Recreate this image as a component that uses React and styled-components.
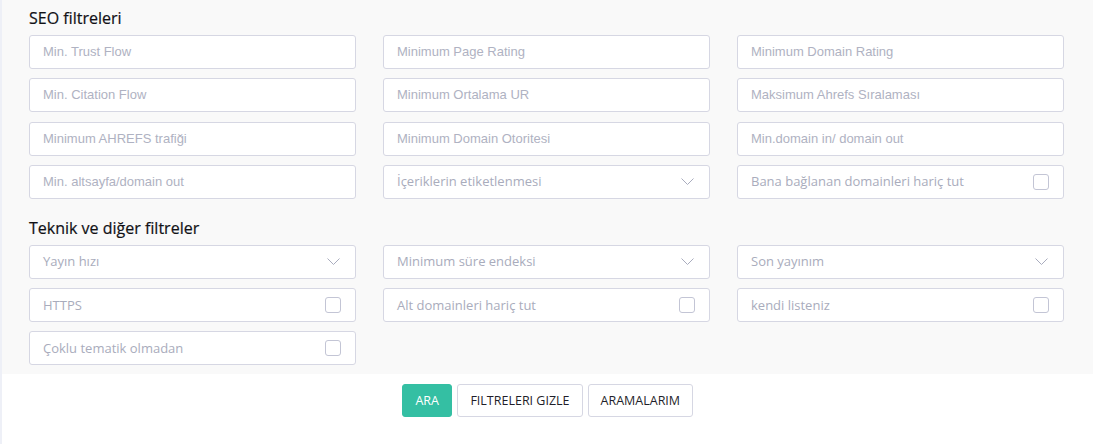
import styled, { createGlobalStyle } from 'styled-components';

const GlobalStyle = createGlobalStyle`
  html, body {
    margin: 0;
    padding: 0;
    background: #ffffff;
  }
  * { box-sizing: border-box; }
`

const Page = styled.div`
  min-height: 444px;
  border-left: 2px solid #eef0f7;
  background: #ffffff;
`
const Panel = styled.div`
  background: #f9f9f9;
  padding: 9px 28px 9px 27px;
`
const Heading = styled.h3`
  margin: ${p => (p.$first ? '0' : '20px')} 0 7px;
  font-family: "Open Sans", sans-serif;
  font-size: 16px;
  font-weight: 400;
  line-height: 19px;
  color: #111116;
  -webkit-text-stroke: 0.2px #111116;
`
const Grid = styled.div`
  display: grid;
  grid-template-columns: repeat(3, 327px);
  column-gap: 27px;
  row-gap: 9.3px;
`
const Field = styled.div`
  height: 34px;
  display: flex;
  align-items: center;
  justify-content: space-between;
  padding: 0 14px 0 13px;
  background: #ffffff;
  border: 1px solid #d6d7e3;
  border-radius: 3px;
`
const Placeholder = styled.span`
  font-family: ${p => (p.$plain ? '"Liberation Sans", Arial, sans-serif' : '"Open Sans", sans-serif')};
  font-size: 13px;
  color: ${p => (p.$plain ? '#afb2c2' : '#a9acbc')};
  white-space: nowrap;
  margin-top: -1px;
`
const Check = styled.span`
  width: 16px;
  height: 16px;
  border: 1px solid #c3c5d5;
  border-radius: 3px;
  background: #fff;
  flex: none;
`
const Actions = styled.div`
  display: flex;
  justify-content: center;
  gap: 5px;
  padding-top: 10px;
`
const Button = styled.button`
  height: 33px;
  padding: 0 ${p => p.$pad || 12}px;
  font-family: "Open Sans", sans-serif;
  font-size: 12.5px;
  text-transform: uppercase;
  border-radius: 3px;
  border: 1px solid ${p => (p.$primary ? '#34bfa3' : '#d6d7e3')};
  background: ${p => (p.$primary ? '#34bfa3' : '#ffffff')};
  color: ${p => (p.$primary ? '#ffffff' : '#1f1f2a')};
  cursor: pointer;
`

const Chevron = () => (
  <svg width="13" height="7" viewBox="0 0 13 7" fill="none" style={{ marginRight: 1 }}>
    <path d="M0.5 0.5l6 6 6-6" stroke="#a9acbe" strokeWidth="1" />
  </svg>
)

const seo = [
  { t: 'Min. Trust Flow' },
  { t: 'Minimum Page Rating' },
  { t: 'Minimum Domain Rating' },
  { t: 'Min. Citation Flow' },
  { t: 'Minimum Ortalama UR' },
  { t: 'Maksimum Ahrefs Sıralaması' },
  { t: 'Minimum AHREFS trafiği' },
  { t: 'Minimum Domain Otoritesi' },
  { t: 'Min.domain in/ domain out' },
  { t: 'Min. altsayfa/domain out' },
  { t: 'İçeriklerin etiketlenmesi', kind: 'select' },
  { t: 'Bana bağlanan domainleri hariç tut', kind: 'check' },
]

const tech = [
  { t: 'Yayın hızı', kind: 'select' },
  { t: 'Minimum süre endeksi', kind: 'select' },
  { t: 'Son yayınım', kind: 'select' },
  { t: 'HTTPS', kind: 'check' },
  { t: 'Alt domainleri hariç tut', kind: 'check' },
  { t: 'kendi listeniz', kind: 'check' },
  { t: 'Çoklu tematik olmadan', kind: 'check' },
]

const FilterField = ({ t, kind }) => (
  <Field>
    <Placeholder $plain={!kind}>{t}</Placeholder>
    {kind === 'select' && <Chevron />}
    {kind === 'check' && <Check />}
  </Field>
)

export default function App() {
  return (
    <Page>
      <GlobalStyle />
      <Panel>
        <Heading $first>SEO filtreleri</Heading>
        <Grid>
          {seo.map(f => <FilterField key={f.t} {...f} />)}
        </Grid>
        <Heading>Teknik ve diğer filtreler</Heading>
        <Grid>
          {tech.map(f => <FilterField key={f.t} {...f} />)}
        </Grid>
      </Panel>
      <Actions>
        <Button $primary $pad={12}>Ara</Button>
        <Button $pad={12.5}>Filtreleri gizle</Button>
        <Button $pad={11.5}>Aramalarım</Button>
      </Actions>
    </Page>
  )
}
